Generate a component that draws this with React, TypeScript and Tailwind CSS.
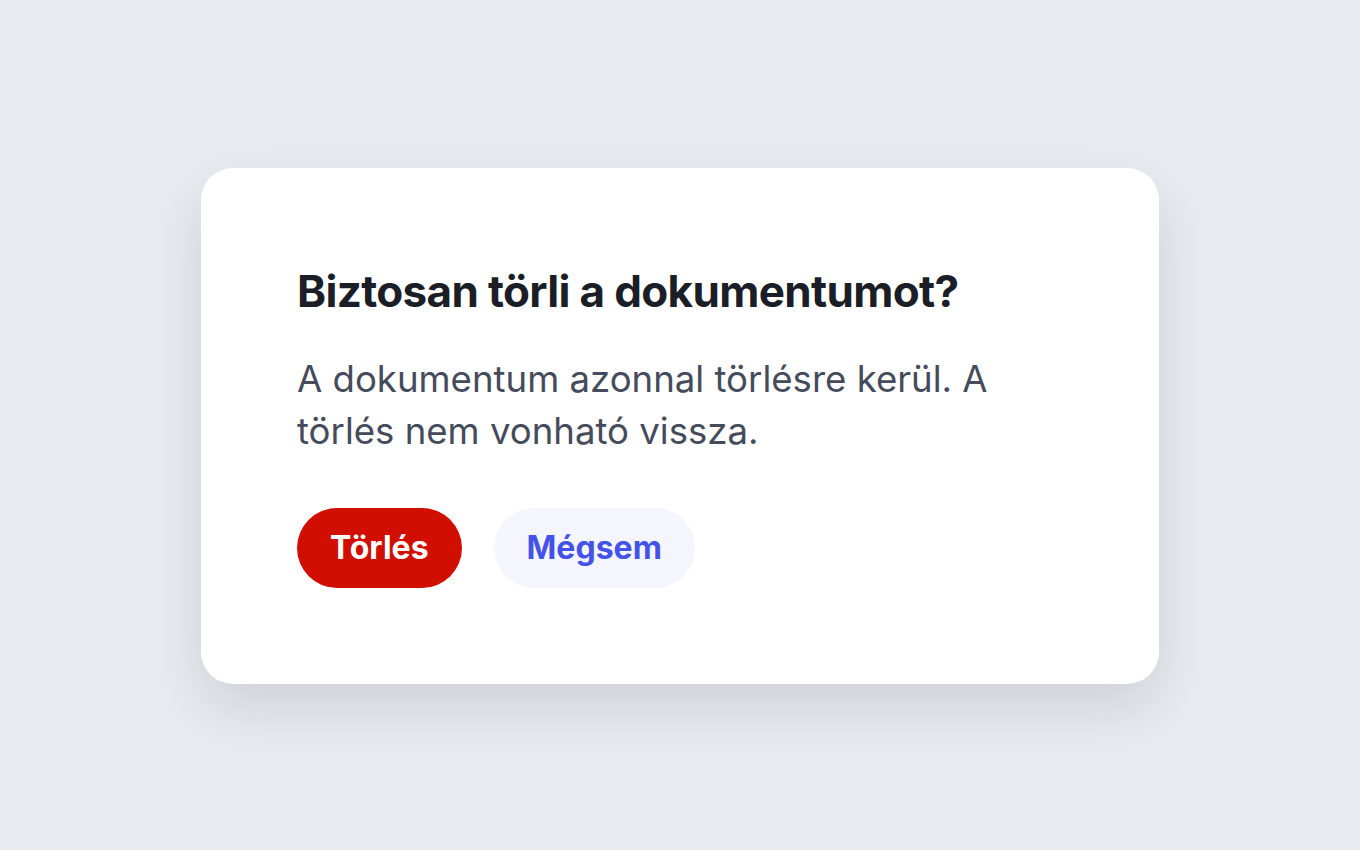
import React from "react";

export default function App() {
  return (
    <div
      className="min-h-screen w-full bg-[#e8ebf0] flex items-center justify-center pt-[2px]"
      style={{ fontFamily: "Inter, 'Noto Sans', sans-serif" }}
    >
      <div className="w-[958px] bg-white rounded-[32px] p-[96px] shadow-[0_24px_56px_rgba(15,23,42,0.12)]">
        <h1 className="text-[44px] leading-[54px] font-bold text-[#1b1e27] tracking-[-0.015em]">
          Biztosan törli a dokumentumot?
        </h1>
        <p className="mt-[35px] text-[36.6px] leading-[52px] text-[#454b5b]">
          A dokumentum azonnal törlésre kerül. A törlés nem vonható vissza.
        </p>
        <div className="mt-[51px] flex gap-[32px]">
          <button className="h-[80px] px-[33px] rounded-full bg-[#d10f00] text-white text-[32px] font-bold">
            Törlés
          </button>
          <button className="h-[80px] px-[33px] rounded-full bg-[#f4f5fd] text-[#4353e8] text-[32px] font-bold">
            Mégsem
          </button>
        </div>
      </div>
    </div>
  );
}
